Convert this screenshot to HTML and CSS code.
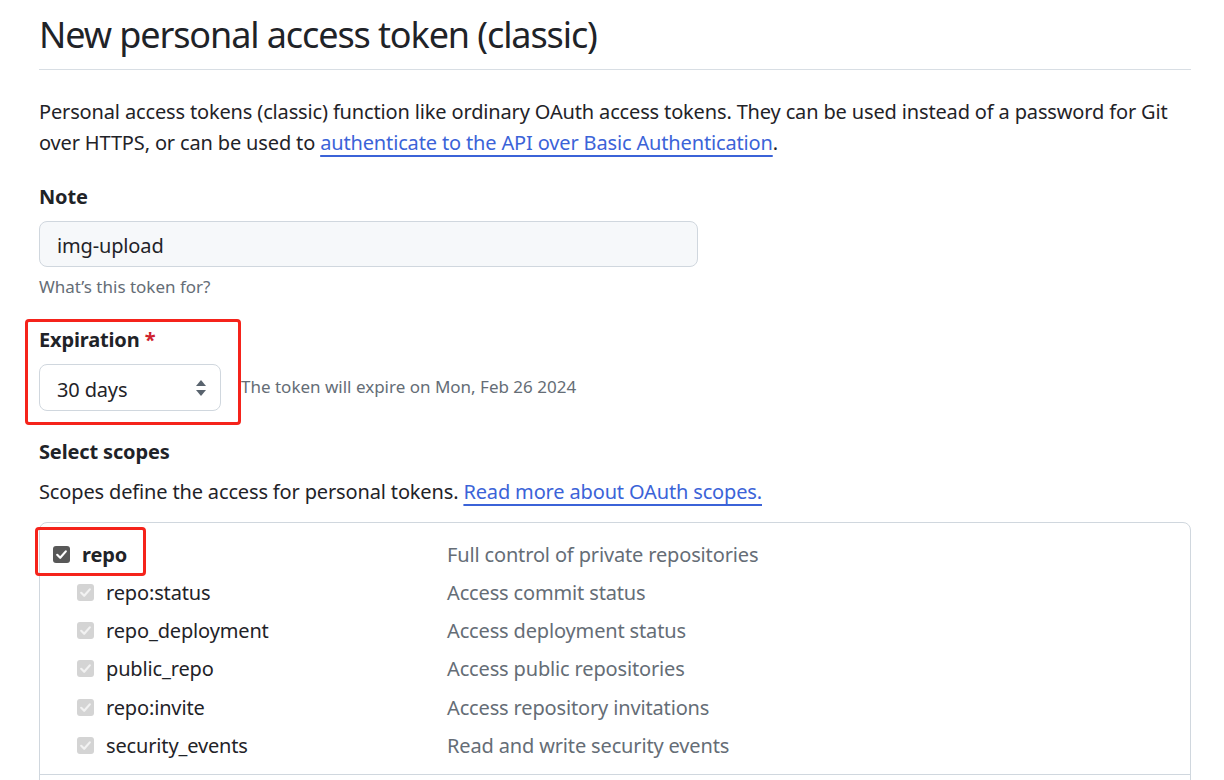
FILE: index.html
```html
<!DOCTYPE html>
<html lang="en">
<head>
<meta charset="utf-8">
<title>New personal access token (classic)</title>
<link rel="stylesheet" href="styles.css">
</head>
<body>
<main class="page">
  <h1 class="subhead">New personal access token (classic)</h1>
  <p class="intro">Personal access tokens (classic) function like ordinary OAuth access tokens. They can be used instead of a password for Git over HTTPS, or can be used to <a href="#" class="link">authenticate to the API over Basic Authentication</a>.</p>

  <div class="group group-note">
    <label class="label">Note</label>
    <div class="input">img-upload</div>
    <div class="hint">What’s this token for?</div>
  </div>

  <div class="group group-exp">
    <span class="highlight highlight-exp"></span>
    <label class="label">Expiration <span class="req">*</span></label>
    <div class="exp-row">
      <div class="select">
        <span class="select-value">30 days</span>
        <svg class="updown" width="12" height="20" viewBox="0 0 12 20"><path d="M6 2 L11 8 H1 Z" fill="#59636e"/><path d="M6 18 L11 12 H1 Z" fill="#59636e"/></svg>
      </div>
      <span class="exp-note">The token will expire on Mon, Feb 26 2024</span>
    </div>
  </div>

  <div class="group group-scopes">
    <div class="label">Select scopes</div>
    <p class="scopes-desc">Scopes define the access for personal tokens. <a href="#" class="link">Read more about OAuth scopes.</a></p>
  </div>

  <div class="scopes">
    <div class="scope-group">
      <div class="scope-row scope-parent">
        <span class="highlight highlight-repo"></span>
        <span class="name"><span class="cb cb-on"><svg width="17" height="17" viewBox="0 0 17 17"><path d="M4.2 8.8 L7.2 11.8 L12.8 5.4" fill="none" stroke="#fff" stroke-width="2.2" stroke-linecap="round" stroke-linejoin="round"/></svg></span><b>repo</b></span>
        <span class="desc">Full control of private repositories</span>
      </div>
      <div class="scope-row scope-child">
        <span class="name"><span class="cb cb-dis"><svg width="17" height="17" viewBox="0 0 17 17"><path d="M4.2 8.8 L7.2 11.8 L12.8 5.4" fill="none" stroke="#f2f2f2" stroke-width="2.2" stroke-linecap="round" stroke-linejoin="round"/></svg></span>repo:status</span>
        <span class="desc">Access commit status</span>
      </div>
      <div class="scope-row scope-child">
        <span class="name"><span class="cb cb-dis"><svg width="17" height="17" viewBox="0 0 17 17"><path d="M4.2 8.8 L7.2 11.8 L12.8 5.4" fill="none" stroke="#f2f2f2" stroke-width="2.2" stroke-linecap="round" stroke-linejoin="round"/></svg></span>repo_deployment</span>
        <span class="desc">Access deployment status</span>
      </div>
      <div class="scope-row scope-child">
        <span class="name"><span class="cb cb-dis"><svg width="17" height="17" viewBox="0 0 17 17"><path d="M4.2 8.8 L7.2 11.8 L12.8 5.4" fill="none" stroke="#f2f2f2" stroke-width="2.2" stroke-linecap="round" stroke-linejoin="round"/></svg></span>public_repo</span>
        <span class="desc">Access public repositories</span>
      </div>
      <div class="scope-row scope-child">
        <span class="name"><span class="cb cb-dis"><svg width="17" height="17" viewBox="0 0 17 17"><path d="M4.2 8.8 L7.2 11.8 L12.8 5.4" fill="none" stroke="#f2f2f2" stroke-width="2.2" stroke-linecap="round" stroke-linejoin="round"/></svg></span>repo:invite</span>
        <span class="desc">Access repository invitations</span>
      </div>
      <div class="scope-row scope-child">
        <span class="name"><span class="cb cb-dis"><svg width="17" height="17" viewBox="0 0 17 17"><path d="M4.2 8.8 L7.2 11.8 L12.8 5.4" fill="none" stroke="#f2f2f2" stroke-width="2.2" stroke-linecap="round" stroke-linejoin="round"/></svg></span>security_events</span>
        <span class="desc">Read and write security events</span>
      </div>
    </div>
    <div class="scope-group scope-next"></div>
  </div>
</main>
</body>
</html>
```

FILE: styles.css
```css
* { box-sizing: border-box; }
html, body { margin: 0; padding: 0; background: #fff; }
body {
  font-family: "Noto Sans", "Open Sans", "Liberation Sans", sans-serif;
  color: #1f2328;
  font-size: 20px;
  letter-spacing: -0.15px;
}
.page {
  width: 1191px;
  padding-left: 39px;
}
.subhead {
  margin: 0;
  padding: 10px 0 9px;
  font-size: 36px;
  line-height: 50px;
  font-weight: 400;
  letter-spacing: -1.1px;
  border-bottom: 1px solid #d8dee4;
}
.intro {
  margin: 26px 0 0;
  line-height: 31px;
  padding-right: 10px;
}
.link {
  color: #3b63d8;
  text-decoration: underline;
  text-underline-offset: 5px;
  text-decoration-thickness: 2px;
}
.group { position: relative; }
.group-note { margin-top: 24px; }
.label {
  display: block;
  font-weight: 700;
  line-height: 30px;
}
.input {
  margin-top: 9px;
  width: 659px;
  height: 46px;
  padding: 3px 0 0 17px;
  display: flex;
  align-items: center;
  background: #f6f8fa;
  border: 1px solid #d0d7de;
  border-radius: 8px;
}
.hint {
  margin-top: 7px;
  font-size: 17px;
  line-height: 26px;
  color: #656d76;
  letter-spacing: 0;
}
.group-exp { margin-top: 25px; }
.req { color: #cf222e; }
.exp-row {
  margin-top: 9px;
  display: flex;
  align-items: center;
  gap: 20px;
}
.select {
  width: 182px;
  height: 47px;
  padding: 0 13px 0 17px;
  display: flex;
  align-items: center;
  justify-content: space-between;
  background: #fff;
  border: 1px solid #d0d7de;
  border-radius: 8px;
}
.select-value { padding-top: 4px; }
.exp-note {
  font-size: 17px;
  color: #656d76;
  letter-spacing: 0;
  margin-top: -3px;
}
.group-scopes { margin-top: 26px; }
.scopes-desc {
  margin: 10px 0 0;
  line-height: 30px;
}
.scopes {
  margin-top: 15px;
  width: 1152px;
  border: 1px solid #d0d7de;
  border-radius: 8px;
}
.scope-group { padding: 12px 0 9.5px; }
.scope-group + .scope-group { border-top: 1px solid #d0d7de; }
.scope-next { height: 40px; }
.scope-row {
  position: relative;
  display: grid;
  grid-template-columns: 407px 1fr;
  align-items: center;
  height: 38.25px;
}
.name {
  display: flex;
  align-items: center;
  gap: 12px;
}
.scope-parent .name { padding-left: 13px; }
.scope-child .name { padding-left: 37px; }
.desc { color: #656d76; }
.cb {
  width: 17px;
  height: 17px;
  border-radius: 3px;
  display: inline-flex;
  flex: none;
}
.cb-on { background: #585858; }
.cb-dis { background: #d4d4d4; }
.highlight {
  position: absolute;
  border: 3px solid #f5231b;
  border-radius: 4px;
  pointer-events: none;
}
.highlight-exp { top: -6px; left: -14px; width: 216px; height: 106px; }
.highlight-repo { top: -8px; left: -5px; width: 111px; height: 49px; }
```
